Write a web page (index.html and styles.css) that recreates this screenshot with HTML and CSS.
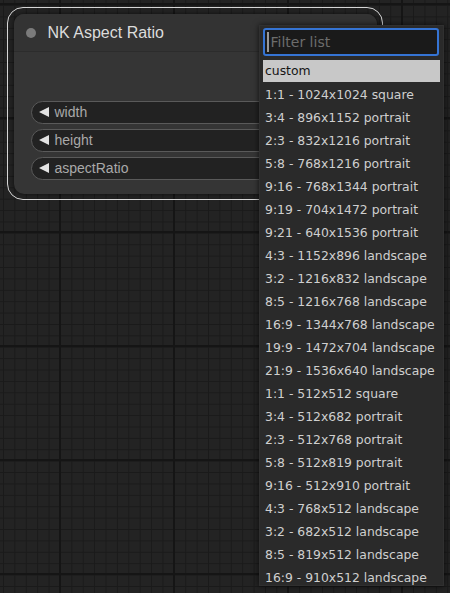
FILE: index.html
```html
<!DOCTYPE html>
<html lang="en">

<head>
    <meta charset="UTF-8">
    <meta name="viewport" content="width=device-width, initial-scale=1.0">
    <title>NK Aspect Ratio</title>
    <link rel="stylesheet" href="styles.css">
</head>

<body>
    <div class="canvas">

        <div class="selected">
            <div class="node">
                <div class="node-title">
                    <span class="dot"></span>
                    <span>NK Aspect Ratio</span>
                </div>
                <div class="node-body">
                    <div class="widget"><span class="arrow"></span>width</div>
                    <div class="widget"><span class="arrow"></span>height</div>
                    <div class="widget"><span class="arrow"></span>aspectRatio</div>
                </div>
            </div>
        </div>

        <div class="menu">
            <div class="filter">
                <span class="caret"></span>
                <span class="placeholder">Filter list</span>
            </div>
            <ul class="entries">
                <li class="active">custom</li>
                <li>1:1 - 1024x1024 square</li>
                <li>3:4 - 896x1152 portrait</li>
                <li>2:3 - 832x1216 portrait</li>
                <li>5:8 - 768x1216 portrait</li>
                <li>9:16 - 768x1344 portrait</li>
                <li>9:19 - 704x1472 portrait</li>
                <li>9:21 - 640x1536 portrait</li>
                <li>4:3 - 1152x896 landscape</li>
                <li>3:2 - 1216x832 landscape</li>
                <li>8:5 - 1216x768 landscape</li>
                <li>16:9 - 1344x768 landscape</li>
                <li>19:9 - 1472x704 landscape</li>
                <li>21:9 - 1536x640 landscape</li>
                <li>1:1 - 512x512 square</li>
                <li>3:4 - 512x682 portrait</li>
                <li>2:3 - 512x768 portrait</li>
                <li>5:8 - 512x819 portrait</li>
                <li>9:16 - 512x910 portrait</li>
                <li>4:3 - 768x512 landscape</li>
                <li>3:2 - 682x512 landscape</li>
                <li>8:5 - 819x512 landscape</li>
                <li>16:9 - 910x512 landscape</li>
            </ul>
        </div>

    </div>
</body>

</html>
```

FILE: styles.css
```css
html,
body {
    margin: 0;
    height: 100%;
    overflow: hidden;
}

.canvas {
    position: relative;
    width: 450px;
    height: 593px;
    background-color: #232323;
    background-image:
        linear-gradient(90deg, #151515 2px, transparent 2px),
        linear-gradient(0deg, #151515 2px, transparent 2px),
        linear-gradient(90deg, #1a1a1a 1px, transparent 1px),
        linear-gradient(0deg, #1a1a1a 1px, transparent 1px);
    background-size: 114px 114px, 114px 114px, 11.4px 11.4px, 11.4px 11.4px;
    background-position: 59px 0, 0 5px, 3px 0, 0 6px;
    font-family: "Liberation Sans", Arial, sans-serif;
}

/* node */

.selected {
    position: absolute;
    left: 7px;
    top: 7px;
    width: 363px;
    padding: 5.5px;
    border: 1.5px solid #d6d6d6;
    border-radius: 16px;
}

.node {
    background: #353535;
    border-radius: 10px;
    height: 180px;
    box-shadow: 0 0 4px rgba(0, 0, 0, 0.6);
    overflow: hidden;
}

.node-title {
    height: 36px;
    display: flex;
    align-items: center;
    gap: 12px;
    padding-left: 12px;
    padding-top: 1px;
    background: #333;
    border-bottom: 1px solid #2c2c2c;
    color: #dcdcdc;
    font-size: 16px;
}

.dot {
    width: 10px;
    height: 10px;
    border-radius: 50%;
    background: #7b7b7b;
}

.node-body {
    display: flex;
    flex-direction: column;
    gap: 5px;
    padding: 49px 17px 0 17px;
}

.widget {
    height: 21px;
    display: flex;
    align-items: center;
    gap: 6px;
    padding-left: 7px;
    background: #222;
    border: 1px solid #5a5a5a;
    border-radius: 12px;
    color: #a9a9a9;
    font-size: 14px;
}

.arrow {
    width: 0;
    height: 0;
    border-top: 5px solid transparent;
    border-bottom: 5px solid transparent;
    border-right: 10px solid #e2e2e2;
}

/* dropdown menu */

.menu {
    position: absolute;
    left: 259px;
    top: 25px;
    width: 185px;
    height: 561px;
    box-sizing: border-box;
    padding: 2px 3px 0 3px;
    background: #2a2a2a;
    border: 1px solid #303030;
    box-shadow: 0 0 6px rgba(0, 0, 0, 0.7);
    font-family: "DejaVu Sans", Verdana, sans-serif;
    overflow: hidden;
}

.filter {
    height: 24px;
    display: flex;
    align-items: center;
    gap: 2px;
    padding-left: 2px;
    margin-right: 1px;
    background: #1a1a1a;
    border: 2px solid #3574d4;
    border-radius: 3px;
    color: #6c6c6c;
    font-size: 14px;
}

.caret {
    width: 1.5px;
    height: 20px;
    background: #9a9a9a;
}

.entries {
    margin: 4px 0 0 0;
    padding: 0;
}

.entries li {
    list-style: none;
    height: 23px;
    line-height: 23px;
    padding-left: 2px;
    color: #cfcfcf;
    font-size: 12.4px;
    white-space: nowrap;
}

.entries li.active {
    height: 22px;
    line-height: 22px;
    margin-bottom: 1px;
    background: #c8c8c8;
    color: #151515;
}
```
